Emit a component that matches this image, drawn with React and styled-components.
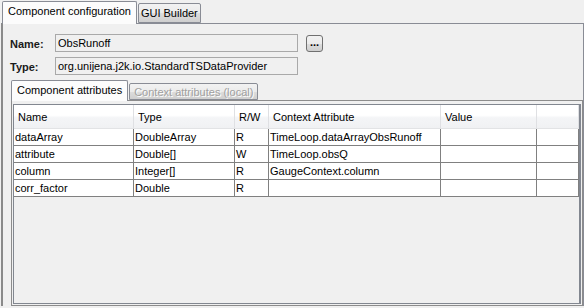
import styled, { createGlobalStyle } from 'styled-components';

const GlobalStyle = createGlobalStyle`
  html, body {
    margin: 0;
    padding: 0;
    background: #f0f0f0;
  }
  body {
    font-family: "Liberation Sans", Arial, sans-serif;
    font-size: 11px;
    color: #000;
  }
`;

const Window = styled.div`
  width: 584px;
  height: 308px;
  overflow: hidden;
  background: #f0f0f0;
  display: flex;
  flex-direction: column;
`;

const TabStrip = styled.div`
  display: flex;
  align-items: flex-end;
  height: 23px;
  padding-left: ${(p) => p.$inset}px;
  position: relative;
  z-index: 1;
`;

const Tab = styled.div`
  box-sizing: border-box;
  height: ${(p) => (p.$active ? p.$h + 1 : p.$h)}px;
  margin-bottom: ${(p) => (p.$active ? -1 : 0)}px;
  padding: 0 ${(p) => p.$pad}px;
  display: flex;
  align-items: ${(p) => (p.$active ? 'flex-start' : 'center')};
  padding-top: ${(p) => (p.$active ? 3 : 0)}px;
  border: 1px solid #898c95;
  border-bottom: ${(p) => (p.$active ? 'none' : '1px solid #898c95')};
  border-radius: 2px 2px 0 0;
  background: ${(p) =>
    p.$active ? '#fcfcfc' : 'linear-gradient(#f2f2f2, #ebebeb 50%, #dddddd 51%, #cfcfcf)'};
  color: ${(p) => (p.$disabled ? '#a0a0a0' : '#000')};
  text-shadow: ${(p) => (p.$disabled ? '1px 1px 0 #ffffff' : 'none')};
  white-space: nowrap;
  margin-right: ${(p) => (p.$active ? 1 : 0)}px;
`;

const OuterPanel = styled.div`
  flex: 1;
  margin-left: 1px;
  margin-bottom: 2px;
  border-left: 2px solid #8a8a8a;
  border-top: 1px solid #898c95;
  border-right: 1px solid #898c95;
  background: #f0f0f0;
  display: flex;
  flex-direction: column;
  padding: 10px 0 0 8px;
`;

const Form = styled.div`
  display: grid;
  grid-template-columns: 37px 243px auto;
  column-gap: 8px;
  row-gap: 5px;
  align-items: center;
  margin-left: -1px;
`;

const Label = styled.div`
  font-weight: bold;
  color: #1a1a1a;
  padding-top: 1px;
`;

const Field = styled.div`
  box-sizing: border-box;
  height: 18px;
  border: 1px solid #a9a9a9;
  background: #f0f0f0;
  padding: 1px 0 0 2px;
  line-height: 15px;
  white-space: nowrap;
  overflow: hidden;
`;

const DotsButton = styled.button`
  box-sizing: border-box;
  width: 17px;
  height: 17px;
  padding: 0 0 4px;
  border: 1px solid #707070;
  border-radius: 3px;
  background: linear-gradient(#f2f2f2, #ebebeb 50%, #dddddd 51%, #cfcfcf);
  font-family: "Liberation Sans", Arial, sans-serif;
  font-size: 11px;
  font-weight: bold;
  line-height: 10px;
  color: #000;
  display: flex;
  align-items: flex-end;
  justify-content: center;
`;

const InnerArea = styled.div`
  flex: 1;
  display: flex;
  flex-direction: column;
  margin-top: 5px;
`;

const InnerTabs = styled(TabStrip)`
  height: 20px;
`;

const InnerPanel = styled.div`
  flex: 1;
  border: 1px solid #8c8c8c;
  background: #f0f0f0;
  padding: 3px 1px 1px 1px;
  display: flex;
  flex-direction: column;
`;

const ScrollPane = styled.div`
  flex: 1;
  border: 1px solid #828790;
  border-right-width: 2px;
  background: #f0f0f0;
  overflow: hidden;
`;

const COLS = '120px 101px 34px 172px 96px 1fr';

const HeaderRow = styled.div`
  display: grid;
  grid-template-columns: ${COLS};
  height: 23px;
  background: linear-gradient(#ffffff, #ffffff 45%, #f4f5f7 55%, #f0f1f3);
  border-bottom: 1px solid #e2e3e5;
`;

const HeaderCell = styled.div`
  border-right: 1px solid #dfe0e3;
  padding: 6px 0 0 4px;
  white-space: nowrap;
  color: #000;
`;

const Row = styled.div`
  display: grid;
  grid-template-columns: ${COLS};
  height: 16px;
  background: #fff;
  border-bottom: 1px solid #808080;
`;

const Cell = styled.div`
  border-right: 1px solid #808080;
  padding: 1px 0 0 1px;
  line-height: 14px;
  white-space: nowrap;
  overflow: hidden;
`;

const rows = [
  ['dataArray', 'DoubleArray', 'R', 'TimeLoop.dataArrayObsRunoff'],
  ['attribute', 'Double[]', 'W', 'TimeLoop.obsQ'],
  ['column', 'Integer[]', 'R', 'GaugeContext.column'],
  ['corr_factor', 'Double', 'R', ''],
];

const headers = ['Name', 'Type', 'R/W', 'Context Attribute', 'Value', ''];

export default function App() {
  return (
    <Window>
      <GlobalStyle />
      <TabStrip $inset={2}>
        <Tab $active $h={22} $pad={5}>Component configuration</Tab>
        <Tab $h={20} $pad={2}>GUI Builder</Tab>
      </TabStrip>
      <OuterPanel>
        <Form>
          <Label>Name:</Label>
          <Field>ObsRunoff</Field>
          <DotsButton>...</DotsButton>
          <Label>Type:</Label>
          <Field>org.unijena.j2k.io.StandardTSDataProvider</Field>
          <span />
        </Form>
        <InnerArea>
          <InnerTabs $inset={0}>
            <Tab $active $h={20} $pad={5}>Component attributes</Tab>
            <Tab $disabled $h={17} $pad={4}>Context attributes (local)</Tab>
          </InnerTabs>
          <InnerPanel>
            <ScrollPane>
              <HeaderRow>
                {headers.map((h, i) => (
                  <HeaderCell key={i}>{h}</HeaderCell>
                ))}
              </HeaderRow>
              {rows.map((r, i) => (
                <Row key={i}>
                  {r.map((c, j) => (
                    <Cell key={j}>{c}</Cell>
                  ))}
                  <Cell />
                  <Cell />
                </Row>
              ))}
            </ScrollPane>
          </InnerPanel>
        </InnerArea>
      </OuterPanel>
    </Window>
  );
}
